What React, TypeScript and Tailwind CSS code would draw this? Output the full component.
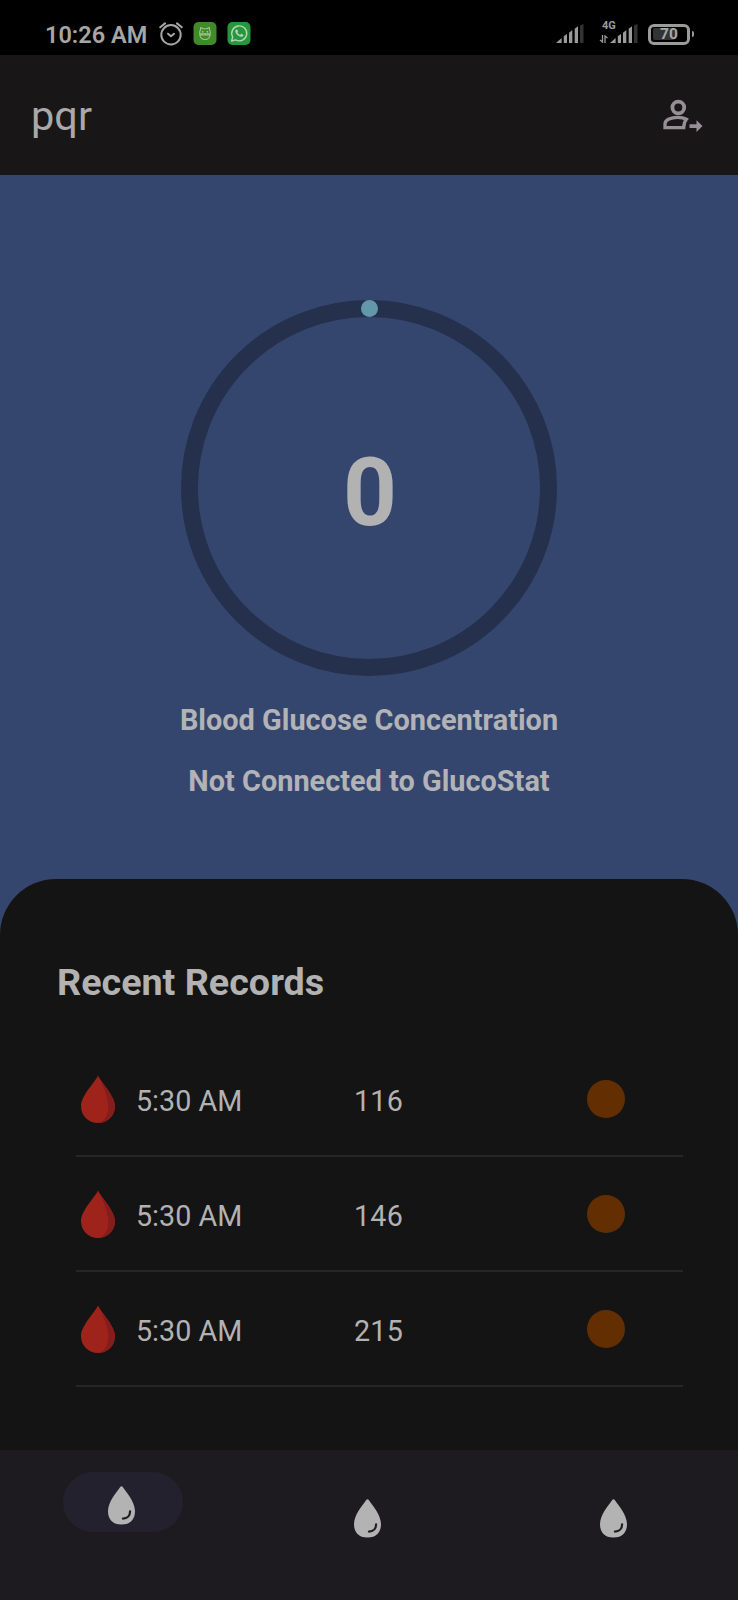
import React from "react";

const records = [
  { time: "5:30 AM", value: 116 },
  { time: "5:30 AM", value: 146 },
  { time: "5:30 AM", value: 215 },
];

function AlarmIcon() {
  return (
    <svg className="h-[24px] w-[24px]" viewBox="0 0 24 24" fill="none" stroke="#a6a6a6" strokeWidth="2" strokeLinecap="round" strokeLinejoin="round">
      <circle cx="12" cy="12.8" r="9.700" />
      <path d="M9 11.700 12 14.300l3-2.600" />
      <path d="M1.200 5.200 6 1.400M22.800 5.200 18 1.400" />
    </svg>
  );
}

function RobotBadge() {
  return (
    <svg className="h-[24px] w-[24px]" viewBox="0 0 24 24" fill="none">
      <rect x=".5" y="0" width="23" height="23" rx="5" fill="#408a29" />
      <g stroke="#9fc78f" strokeWidth="1.1" strokeLinecap="round" strokeLinejoin="round">
        <path d="M7.300 8.300 7.700 5.600l2.500 1.200h3.600l2.500-1.200.4 2.700c.7 1.400.8 2.500.5 3.400H6.800c-.3-1-.2-2.100.5-3.400Z" />
        <path d="M6.500 12.900h11M7 13.200c.3 2.900 2.300 4.300 5 4.300s4.700-1.400 5-4.300" />
        <path d="M9.700 9.500v.5M14.300 9.500v.5" strokeWidth="1.500" />
      </g>
    </svg>
  );
}

function ChatBadge() {
  return (
    <svg className="h-[24px] w-[24px]" viewBox="0 0 24 24" fill="none">
      <rect x=".5" y="0" width="23" height="23" rx="5" fill="#27973d" />
      <path d="m4.600 19 1.100-4A7.500 7.500 0 1 1 8.600 17.900Z" stroke="#b5d3b9" strokeWidth="1.400" strokeLinejoin="round" />
      <path d="M9.300 7.500c.6-.3 1 0 1.200.5l.5 1.200c.1.4-.1.700-.6 1.200.6 1.200 1.500 2 2.700 2.500l.9-.9c.2-.2.5-.2.8-.1l1.400.8c.4.2.3.5.2.9-.4 1-1.500 1.400-2.500 1.200-3-.6-5.300-2.900-5.600-5.300-.1-.8.4-1.600 1-2Z" fill="#b5d3b9" />
    </svg>
  );
}

function SignalBars() {
  return (
    <svg className="h-[20px] w-[28px]" viewBox="0 0 28 20" fill="#9b9b9b">
      <path d="M0 19 5.600 14v5Z" />
      <path d="M7.800 12.200 11 9.900V19H7.800Z" />
      <path d="M13 8.700 16.300 6.100V19H13Z" />
      <path d="M18.700 4.700 22 2.200V19h-3.300Z" />
      <path d="M24 1.500 27.500 0v19H24Z" fill="#333" />
    </svg>
  );
}

function UserArrowIcon() {
  return (
    <svg className="h-[36px] w-[42px]" viewBox="0 0 42 36" fill="none" stroke="#959096">
      <circle cx="16.300" cy="10.500" r="5.900" strokeWidth="3.800" />
      <path d="M3 30.700v-3.800c0-4 6.300-6.600 12.700-6.600 3.300 0 6.300.6 8.700 2-1.800 2.100-2.600 4.800-2.700 8.400Z" strokeWidth="3.300" />
      <path d="M27.500 27.300h7v-4.100l6 5.900-6 5.900v-4.100h-7Z" fill="#959096" stroke="none" />
    </svg>
  );
}

function BloodDrop() {
  return (
    <svg className="h-[48px] w-[34px] shrink-0" viewBox="0 0 34 48">
      <path d="M17 .5C19.700 6.800 34 20.600 34 31.200 34 40.700 26.300 48 17 48S0 40.700 0 31.200C0 20.600 14.300 6.800 17 .5Z" fill="#9e241b" />
      <path d="M20 6C24.500 13 34 22.700 34 31.200 34 40.300 27 47.300 18.300 48c6-2.600 9.200-8.700 8.900-17C26.900 22.500 23 13.500 20 6Z" fill="#861c1b" />
    </svg>
  );
}

function TabDrop() {
  return (
    <svg className="h-[39px] w-[27px]" viewBox="0 0 27 39">
      <path d="M12.200.9C12.900 0 14.100 0 14.800.9 18.400 6.300 27 15.600 27 25.200 27 33.500 22.200 38.500 13.500 38.500S0 33.500 0 25.200C0 15.600 8.600 6.300 12.200.9Z" fill="#b3b3b3" />
      <path d="M22.100 25.300c0 4.400-2.800 7.300-7.200 7.300" fill="none" stroke="#1f1f1f" strokeWidth="2.200" strokeLinecap="round" />
    </svg>
  );
}

export default function App() {
  return (
    <div className="flex h-[1600px] w-[738px] flex-col overflow-hidden bg-[#35466e] font-['Roboto',sans-serif] text-[#b2b2b2]">
      <div className="flex h-[55px] shrink-0 items-center justify-between bg-black pt-[13px] pr-[44px] pl-[45px]">
        <div className="flex items-center">
          <span className="w-[114px] pt-px text-[23.5px] leading-6 font-semibold whitespace-nowrap text-[#a6a6a6]">10:26 AM</span>
          <AlarmIcon />
          <span className="ml-[10px] flex gap-[10px]">
            <RobotBadge />
            <ChatBadge />
          </span>
        </div>
        <div className="flex items-center">
          <SignalBars />
          <div className="relative ml-[26px]">
            <SignalBars />
            <span className="absolute -top-[3px] -left-[8px] text-[11px] leading-[10px] font-bold text-[#9b9b9b]">4G</span>
            <svg className="absolute top-[11px] -left-[11px] h-[8px] w-[10px]" viewBox="0 0 10 8" fill="none" stroke="#9b9b9b" strokeWidth="1.300">
              <path d="M3.500 0v7L1 5M6 8V1l2.500 2" />
            </svg>
          </div>
          <div className="ml-[10px] flex items-center gap-[2px]">
            <div className="flex h-[21px] w-[42px] items-center rounded-[6px] border-[3px] border-[#9b9b9b] px-[2px]">
              <div className="flex h-[12px] w-[22px] items-center rounded-[2px] bg-[#333]">
                <span className="pl-[7px] text-[15.5px] leading-4 font-bold text-[#a6a6a6]">70</span>
              </div>
            </div>
            <div className="h-[6px] w-[2px] rounded-r bg-[#9b9b9b]" />
          </div>
        </div>
      </div>

      <header className="flex h-[120px] shrink-0 items-center justify-between bg-[#181617] pr-[34px] pl-[30px]">
        <h1 className="pt-px pl-px text-[41.5px] leading-[50px] text-[#aba8aa]">pqr</h1>
        <UserArrowIcon />
      </header>

      <main className="flex h-[704px] shrink-0 flex-col items-center pt-[125px]">
        <div className="relative flex h-[376px] w-[376px] items-center justify-center rounded-full border-[17px] border-[#25304d]">
          <span className="pt-[9px] pl-[2px] text-[94px] leading-[100px] font-bold">0</span>
          <span className="absolute -top-[17px] left-[162.5px] h-[17px] w-[17px] rounded-full bg-[#6397aa]" />
        </div>
        <p className="mt-[28px] text-[28.9px] leading-[32px] font-bold whitespace-nowrap text-[#b1b3b7]">Blood Glucose Concentration</p>
        <p className="mt-[29px] text-[28.9px] leading-[32px] font-bold whitespace-nowrap text-[#b1b3b7]">Not Connected to GlucoStat</p>
      </main>

      <section className="h-[571px] shrink-0 rounded-t-[56px] bg-[#141414] pt-[80px]">
        <h2 className="pl-[57px] text-[37.7px] leading-[46px] font-bold">Recent Records</h2>
        <ul className="mt-[37px] mr-[55px] ml-[76px]">
          {records.map((record, i) => (
            <li key={i} className="flex h-[115px] items-center border-b-2 border-[#262626] pt-px pl-[5px]">
              <BloodDrop />
              <span className="w-[239px] pt-[3px] pl-[21px] text-[28.7px] leading-8">{record.time}</span>
              <span className="w-[233px] pt-[3px] text-[28.7px] leading-8 tracking-[0.2px]">{record.value}</span>
              <span className="h-[38px] w-[38px] rounded-full bg-[#632f02]" />
            </li>
          ))}
        </ul>
      </section>

      <nav className="grid h-[150px] shrink-0 grid-cols-3 bg-[#1d1b1f] pt-[22px]">
        <div className="flex justify-center">
          <div className="flex h-[60px] w-[120px] justify-center rounded-full bg-[#24212e] pt-[14px] pr-[3px]">
            <TabDrop />
          </div>
        </div>
        <div className="flex justify-center pt-[27px] pr-[3px]">
          <TabDrop />
        </div>
        <div className="flex justify-center pt-[27px] pr-[3px]">
          <TabDrop />
        </div>
      </nav>
    </div>
  );
}
